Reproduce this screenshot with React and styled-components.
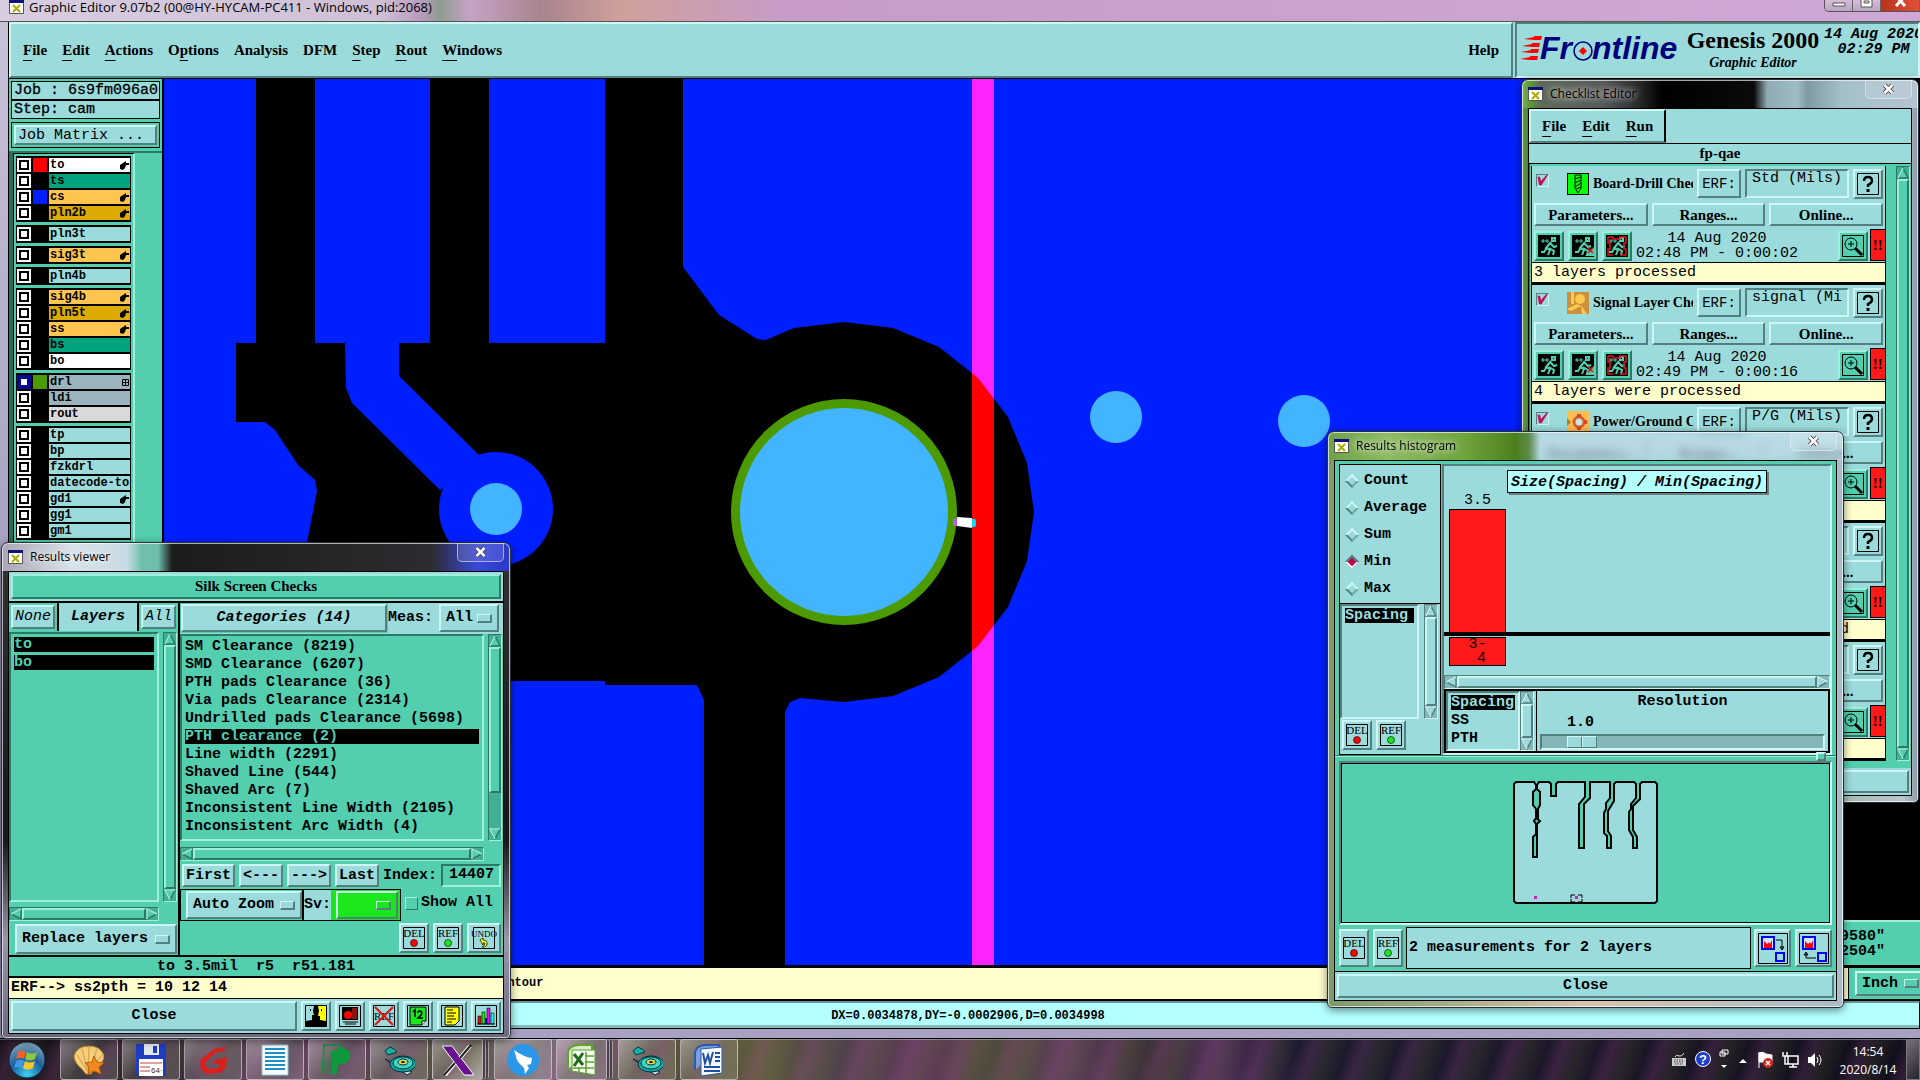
import React, { useState } from "react";
import styled, { createGlobalStyle, css } from "styled-components";

const mono = `"Liberation Mono", "DejaVu Sans Mono", monospace`;
const serif = `"Liberation Serif", "DejaVu Serif", serif`;
const ui = `"Open Sans", "Noto Sans", sans-serif`;

const color = {
  cyan: "#9cdbdb",
  cyanLight: "#cdf6f4",
  cyanDark: "#53807f",
  teal: "#53cfb0",
  tealLight: "#a0efdc",
  tealDark: "#2a7a64",
  tealTrough: "#44ae94",
  cream: "#ffffcc",
  ice: "#b4ffff",
  red: "#ff1a1a"
};

const GlobalStyle = createGlobalStyle`
  * { box-sizing: border-box; }
  html, body, #root { height: 100%; }
  body {
    margin: 0;
    overflow: hidden;
    background: #000;
    color: #000;
    font-family: ${serif};
  }
  button, input, select { font: inherit; color: inherit; margin: 0; padding: 0; }
  ul { list-style: none; margin: 0; padding: 0; }
  h1, h2, p { margin: 0; font: inherit; }
  svg { display: block; }
`;

const raised = css`
  border: 2px solid;
  border-color: ${p => (p.$teal ? `${color.tealLight} ${color.tealDark} ${color.tealDark} ${color.tealLight}` : `${color.cyanLight} ${color.cyanDark} ${color.cyanDark} ${color.cyanLight}`)};
`;
const sunken = css`
  border: 2px solid;
  border-color: ${p => (p.$teal ? `${color.tealDark} ${color.tealLight} ${color.tealLight} ${color.tealDark}` : `${color.cyanDark} ${color.cyanLight} ${color.cyanLight} ${color.cyanDark}`)};
`;

//--------------------------------------------
// shared parts
const Desktop = styled.div`
  position: relative;
  height: 100%;
  display: flex;
  flex-direction: column;
`;
const MotifButton = styled.button`
  ${raised};
  background: ${p => (p.$teal ? color.teal : color.cyan)};
  padding: 0 2px;
  font-family: ${p => (p.$serif ? serif : mono)};
  font-size: 15px;
  line-height: 18px;
  font-weight: ${p => (p.$thin ? 400 : 700)};
  font-style: ${p => (p.$italic ? "italic" : "normal")};
  text-align: ${p => p.$align || "center"};
  white-space: nowrap;
  flex: ${p => (p.$grow ? "1 1 0" : "none")};
  min-width: 0;
`;
const IconButton = styled.button`
  ${raised};
  background: ${p => (p.$teal ? color.teal : color.cyan)};
  width: ${p => (p.$wide ? 34 : 30)}px;
  height: 30px;
  flex: none;
  display: flex;
  align-items: center;
  justify-content: center;
`;
const Bar = styled.div`
  display: flex;
  flex: none;
  flex-direction: ${p => (p.$vertical ? "column" : "row")};
  ${p => (p.$vertical ? "width: 14px;" : "height: 14px;")}
  ${sunken};
  border-width: 1px;
  background: ${p => (p.$teal ? color.tealTrough : "#84b8b8")};
`;
const BarArrow = styled.button`
  border: 0;
  background: none;
  flex: none;
  width: 12px;
  height: 12px;
`;
const BarThumb = styled.div`
  flex: ${p => p.$size} 1 0;
  ${raised};
  background: ${p => (p.$teal ? color.teal : color.cyan)};
`;
const BarRest = styled.div`
  flex: ${p => p.$size} 1 0;
`;
const arrowPoints = {
  up: "6,1 11,11 1,11",
  down: "1,1 11,1 6,11",
  left: "1,6 11,1 11,11",
  right: "1,1 11,6 1,11"
};
const arrowShine = {
  up: "M1 11L6 1",
  down: "M6 11L1 1H11",
  left: "M1 6L11 1",
  right: "M1 11V1L11 6"
};
const Arrow = ({ dir, teal }) => (
  <BarArrow type="button" aria-label={`Scroll ${dir}`}>
    <svg width="12" height="12" viewBox="0 0 12 12">
      <polygon
        points={arrowPoints[dir]}
        fill={teal ? color.teal : color.cyan}
        stroke={teal ? color.tealDark : color.cyanDark}
        strokeWidth="1.500"
      />
      <path d={arrowShine[dir]} fill="none" stroke={teal ? color.tealLight : color.cyanLight} strokeWidth="1.500" />
    </svg>
  </BarArrow>
);
const ScrollBar = ({ vertical, teal, size = 1, rest = 0 }) => (
  <Bar $vertical={vertical} $teal={teal}>
    <Arrow dir={vertical ? "up" : "left"} teal={teal} />
    <BarThumb $size={size} $teal={teal} />
    {rest > 0 && <BarRest $size={rest} />}
    <Arrow dir={vertical ? "down" : "right"} teal={teal} />
  </Bar>
);
const List = styled.ul`
  ${sunken};
  flex: 1 1 0;
  min-width: 0;
  background: ${p => (p.$teal ? color.teal : color.cyan)};
  padding: ${p => (p.$teal ? 3 : 2)}px 3px;
  overflow: hidden;
`;
const ListItem = styled.button`
  display: block;
  width: 100%;
  height: 15px;
  margin-bottom: 3px;
  border: 0;
  text-align: left;
  font: 700 15px/15px ${mono};
  white-space: nowrap;
  overflow: hidden;
  color: ${p => (p.$on ? (p.$teal ? color.teal : color.cyan) : "#000")};
  background: ${p => (p.$on ? "#000" : "transparent")};
`;
const OptionMenu = styled.label`
  ${raised};
  background: ${p => p.$bg || color.cyan};
  display: flex;
  align-items: center;
  padding: 0 5px;
  width: ${p => p.$w || "auto"};
  height: 100%;
  select {
    flex: 1 1 0;
    min-width: 0;
    appearance: none;
    border: 0;
    background: none;
    font: 700 15px/18px ${mono};
  }
  &::after {
    content: "";
    width: 12px;
    height: 6px;
    flex: none;
    border: 1px solid;
    border-width: 1px 2px 2px 1px;
    border-color: ${color.cyanLight} ${color.cyanDark} ${color.cyanDark} ${color.cyanLight};
  }
`;
const Tick = styled.input.attrs({ type: "checkbox" })`
  appearance: none;
  width: 13px;
  height: 13px;
  flex: none;
  border: 1px solid;
  border-color: ${p => (p.$raised ? `${color.tealLight} ${color.tealDark} ${color.tealDark} ${color.tealLight}` : `${color.cyanDark} ${color.cyanLight} ${color.cyanLight} ${color.cyanDark}`)};
  &:checked::after {
    content: "";
    display: block;
    width: 11px;
    height: 11px;
    background: #c0105a;
    clip-path: polygon(5% 15%, 28% 15%, 36% 55%, 85% 0, 100% 0, 40% 95%, 18% 90%);
  }
`;

//--------------------------------------------
// framed window
const Frame = styled.section`
  position: absolute;
  display: flex;
  flex-direction: column;
  width: ${p => p.$width}px;
  padding: 0 6px 6px;
  border: 1px solid #26323a;
  border-radius: 7px 7px 5px 5px;
  box-shadow: inset 0 0 0 1px rgba(255, 255, 255, 0.65), 0 2px 8px rgba(0, 0, 0, 0.5);
  background: ${p => p.$glass};
`;
const ViewerFrame = styled(Frame)`
  left: 1px;
  bottom: 41px;
  padding-bottom: 4px;
`;
const ChecklistFrame = styled(Frame)`
  top: 79px;
  right: 1px;
`;
const HistogramFrame = styled(Frame)`
  top: 431px;
  right: 76px;
  backdrop-filter: blur(4px);
`;
const Caption = styled.header`
  height: 28px;
  flex: none;
  display: flex;
  align-items: center;
  gap: 7px;
  font: 400 12px/16px ${ui};
  h2 {
    flex: 1;
    text-shadow: 0 0 6px rgba(255, 255, 255, 0.8), 0 0 10px rgba(255, 255, 255, 0.7);
  }
`;
const CloseGlass = styled.button`
  align-self: flex-start;
  width: 47px;
  height: 19px;
  border: 1px solid rgba(230, 240, 250, 0.6);
  border-top: 0;
  border-radius: 0 0 5px 5px;
  background: rgba(255, 255, 255, 0.12);
  display: flex;
  align-items: center;
  justify-content: center;
`;
const Inner = styled.div`
  border: 1px solid #000;
  background: ${p => p.$bg};
  display: flex;
  flex-direction: column;
`;
const XIcon = () => (
  <svg width="15" height="14" viewBox="0 0 15 14">
    <path d="M.5 .5H14.500V13.500H.5Z" fill="#fff" stroke="#555" />
    <path d="M0 0H15V3H0Z" fill="#10107a" />
    <path d="M4 5L11 12M11 5L4 12" stroke="#a9ad00" strokeWidth="2" />
  </svg>
);
const CrossIcon = () => (
  <svg width="13" height="12" viewBox="0 0 13 12">
    <path d="M2.500 2L10.500 10M10.500 2L2.500 10" stroke="#444" strokeWidth="4.500" />
    <path d="M2.500 2L10.500 10M10.500 2L2.500 10" stroke="#fff" strokeWidth="2.600" />
  </svg>
);
const WindowCaption = ({ title }) => (
  <Caption>
    <XIcon />
    <h2>{title}</h2>
    <CloseGlass type="button" aria-label="Close window">
      <CrossIcon />
    </CloseGlass>
  </Caption>
);

//--------------------------------------------
// main window
const Main = styled.main`
  flex: 1 1 0;
  min-height: 0;
  display: flex;
  flex-direction: column;
  padding: 0 0 9px 8px;
  background: linear-gradient(#c9c4d8, #8f8ab0 90%, #aaa2c4);
`;
const MainCaption = styled.header`
  height: 22px;
  flex: none;
  display: flex;
  align-items: flex-start;
  margin-left: -8px;
  padding-left: 9px;
  gap: 5px;
  font: 400 13px/14px ${ui};
  border-bottom: 1px solid #555;
  background: linear-gradient(90deg, #d8cde0 0, #cfc0d6 380px, #b99cc0 420px, #8f9c90 440px, #c6a3c6 470px, #a8848f 540px, #cf9f9a 620px, #c79bc6 780px, #cfa9d6 100%);
  h1 {
    flex: 1;
    white-space: nowrap;
  }
`;
const Controls = styled.div`
  display: flex;
  height: 12px;
  border: 1px solid #555;
  border-width: 0 0 1px 1px;
  border-radius: 0 0 0 5px;
  overflow: hidden;
`;
const Control = styled.button`
  width: ${p => (p.$close ? 39 : 28)}px;
  border: 0;
  border-right: 1px solid #666;
  background: ${p => (p.$close ? "linear-gradient(90deg, #b8321c, #e0503a)" : "linear-gradient(#d8bcd8, #b9a4c4)")};
  display: flex;
  align-items: flex-start;
  justify-content: center;
`;
const MenuRow = styled.div`
  flex: none;
  display: flex;
  gap: 2px;
  height: 57px;
  background: ${color.cyan};
  border-left: 1px solid #000;
  border-bottom: 1px solid #000;
`;
const Menu = styled.nav`
  ${raised};
  flex: 1;
  display: flex;
  align-items: center;
  gap: 15px;
  padding: 0 12px;
`;
const MenuItem = styled.button`
  border: 0;
  background: none;
  font: 700 15px/20px ${serif};
  &:last-child {
    margin-left: ${p => (p.$last ? "auto" : 0)};
  }
  u {
    text-underline-offset: 5px;
    text-decoration-thickness: 1px;
  }
`;
const Brand = styled.div`
  ${sunken};
  flex: none;
  width: 405px;
  display: flex;
  align-items: center;
  padding-left: 3px;
  overflow: hidden;
  svg {
    flex: none;
  }
`;
const Product = styled.div`
  width: 138px;
  flex: none;
  text-align: center;
  font: 700 24px/26px ${serif};
  small {
    display: block;
    font: italic 700 14px/20px ${serif};
  }
`;
const Stamp = styled.time`
  flex: none;
  align-self: flex-start;
  padding: 3px 0 0 2px;
  text-align: center;
  font: italic 700 15px/15px ${mono};
  span {
    display: block;
  }
`;
const Work = styled.div`
  flex: 1 1 0;
  min-height: 0;
  display: flex;
  border-bottom: 3px solid #000;
`;
const Side = styled.aside`
  flex: none;
  width: 156px;
  display: flex;
  flex-direction: column;
  background: ${color.teal};
  border: 1px solid #000;
  border-width: 0 2px 0 1px;
  overflow: hidden;
`;
const JobBox = styled.div`
  margin: 2px 2px 0;
  border: 1px solid #000;
  background: ${color.cyan};
  font: 400 15px/17px ${mono};
  -webkit-text-stroke: 0.3px #000;
  padding-left: 2px;
  white-space: pre;
  & + & {
    margin-top: 0;
  }
`;
const MatrixBox = styled.div`
  margin: 3px 2px 0;
  border: 1px solid #000;
  padding: 2px;
  display: flex;
  height: 26px;
`;
const LayerPane = styled.div`
  margin-top: 3px;
  flex: 1 1 0;
  min-height: 0;
  display: flex;
  border-top: 2px solid ${color.tealDark};
  border-left: 4px solid #2c6a5c;
`;
const LayerList = styled.div`
  width: 122px;
  padding: 2px;
  display: flex;
  flex-direction: column;
  gap: 3px;
  border: 1px solid #000;
  border-right: 2px solid ${color.tealLight};
`;
const LayerGroup = styled.ul`
  flex: none;
  background: #000;
  padding: 2px 1px;
  display: flex;
  flex-direction: column;
  gap: 2px;
`;
const LayerRow = styled.li`
  height: 14px;
  display: flex;
  gap: 2px;
`;
const LayerTick = styled.input.attrs({ type: "checkbox" })`
  appearance: none;
  width: 14px;
  height: 14px;
  flex: none;
  background: #fff;
  border: 2px solid ${p => (p.$active ? "#0a0a8c" : "#fff")};
  outline: 2px solid ${p => (p.$active ? "#0a0a8c" : "#000")};
  outline-offset: -4px;
`;
const Swatch = styled.i`
  width: 14px;
  flex: none;
  background: ${p => p.$c || "#000"};
`;
const LayerName = styled.button`
  flex: 1;
  border: 0;
  display: flex;
  align-items: center;
  justify-content: space-between;
  padding: 0 1px;
  background: ${p => p.$c};
  font: 700 12px/14px ${mono};
  white-space: nowrap;
`;
const Canvas = styled.div`
  flex: 1 1 0;
  min-width: 0;
  background: #001fff;
  overflow: hidden;
  svg {
    width: 100%;
    height: 100%;
  }
`;
const Tools = styled.aside`
  width: 158px;
  flex: none;
  background: #000;
  display: flex;
  flex-direction: column;
  justify-content: flex-end;
`;
const Coords = styled.p`
  border-top: 2px solid ${color.tealLight};
  background: ${color.teal};
  padding: 7px 35px 6px 0;
  text-align: right;
  font: 700 15px/15px ${mono};
`;
const Prompt = styled.div`
  flex: none;
  display: flex;
  height: 33px;
  background: ${color.cream};
  border-bottom: 2px solid #000;
  overflow: hidden;
  p {
    flex: 1;
    padding-left: 485px;
    font: 700 12px/31px ${mono};
  }
`;
const UnitBox = styled.div`
  width: 78px;
  margin-right: -6px;
  border-left: 1px solid #000;
  background: ${color.teal};
  padding: 3px 0 3px 6px;
`;
const StatusLine = styled.div`
  flex: none;
  height: 28px;
  border: 1px solid #000;
  border-top: 2px solid #6a9696;
  background: ${color.ice};
  text-align: center;
  padding-left: 8px;
  box-shadow: inset 0 -3px 0 #86bcbc;
  font: 700 12px/27px ${mono};
`;

const hand = (
  <svg width="9" height="9" viewBox="0 0 9 9">
    <path d="M0 4L3 2L6 0V2H9V4H6L5 7L3 9L0 8Z" />
  </svg>
);
const grid = (
  <svg width="7" height="7" viewBox="0 0 7 7">
    <path d="M.5 .5H6.500V6.500H.5ZM3.500 0V7M0 3.500H7" fill="none" stroke="#000" />
  </svg>
);

const C = { c: color.cyan, y: "#ffc54e", g: "#dcaa00", t: "#00a37e", s: "#9bb3bd" };
const layers = [
  [
    ["to", "#fff", hand, "#f00"],
    ["ts", C.t],
    ["cs", C.y, hand, "#001fff"],
    ["pln2b", C.g, hand]
  ],
  [["pln3t", C.c]],
  [["sig3t", C.y, hand]],
  [["pln4b", C.c]],
  [
    ["sig4b", C.y, hand],
    ["pln5t", C.g, hand],
    ["ss", C.y, hand],
    ["bs", C.t],
    ["bo", "#fff"]
  ],
  [
    ["drl", C.s, grid, "#4a9a00"],
    ["ldi", C.s],
    ["rout", "#d9d9d9"]
  ],
  [
    ["tp", C.c],
    ["bp", C.c],
    ["fzkdrl", C.c],
    ["datecode-to", C.c],
    ["gd1", C.c, hand],
    ["gg1", C.c],
    ["gm1", C.c]
  ]
];

const FrontlineLogo = () => (
  <svg width="164" height="42" viewBox="0 -4 164 42">
    <g fill="#f00">
      <path d="M4 6L14 4V3H22L21 7H14ZM2 13L12 11V10H20L19 14H12ZM1 19L11 17V16H19L18 20H11ZM0 26L10 24V23H18L17 27H10Z" />
    </g>
    <g fill="#00007c" fontFamily="Liberation Sans, Arial, sans-serif" fontWeight="700" fontStyle="italic" fontSize="32">
      <text x="20" y="26">Fr</text>
      <text x="72" y="26">ntline</text>
    </g>
    <circle cx="63" cy="18" r="9" fill="none" stroke="#00007c" strokeWidth="1.500" />
    <path d="M63 14L67 18L63 22L59 18Z" fill="#f00" />
  </svg>
);

const PAD =
  "1034,512 1027,463 1008,417 978,378 939,347 893,328 844,322 794,328 749,347 710,378 690,512 710,646 749,677 794,696 844,702 893,696 939,677 978,646 1008,607 1027,561";

const Board = () => (
  <svg viewBox="164 79 1598 886" preserveAspectRatio="xMinYMin slice">
    <path d="M164 79H256V79H315V343H430V79H489V343H605V79H683V267L719 315L757 339L764 340L780 360L900 600L843 702L800 698L790 702L785 712V965H704V700L697 685H605V681H307V542L317 491L315 480L298 465L275 430L265 422H236V343H256V79Z" />
    <polygon points={PAD} />
    <path d="M345 342H399V376L479 455L440 490L352 403L346 388Z" fill="#001fff" />
    <circle cx="496" cy="509" r="57" fill="#001fff" />
    <circle cx="496" cy="509" r="26" fill="#43b4ff" />
    <path d="M972 79H994V965H972Z" fill="#ff23ff" />
    <clipPath id="pad">
      <polygon points={PAD} />
    </clipPath>
    <path d="M972 79H994V965H972Z" fill="#f00" clipPath="url(#pad)" />
    <circle cx="844" cy="512" r="108.500" fill="#43b4ff" stroke="#4a9a00" strokeWidth="9" />
    <circle cx="1116" cy="417" r="26" fill="#43b4ff" />
    <circle cx="1304" cy="421" r="26" fill="#43b4ff" />
    <path d="M957 517L972 518V528L957 526Z" fill="#fff" />
    <path d="M953 519L957 518V526H953Z" fill="#b060e0" />
    <path d="M972 519H975L976 521V525L975 527H972Z" fill="#00e0ff" />
  </svg>
);

const Hot = ({ text, at }) =>
  at === undefined ? (
    text
  ) : (
    <>
      {text.slice(0, at)}
      <u>{text[at]}</u>
      {text.slice(at + 1)}
    </>
  );

const mainMenu = [
  ["File", 0],
  ["Edit", 0],
  ["Actions", 0],
  ["Options", 1],
  ["Analysis"],
  ["DFM"],
  ["Step", 0],
  ["Rout", 0],
  ["Windows", 0]
];

const MainWindow = () => (
  <Main>
    <MainCaption>
      <XIcon />
      <h1>Graphic Editor 9.07b2 (00@HY-HYCAM-PC411 - Windows, pid:2068)</h1>
      <Controls>
        <Control type="button" aria-label="Minimize">
          <svg width="14" height="8" viewBox="0 0 14 8">
            <path d="M1 3H13V6H1Z" fill="#fff" stroke="#555" />
          </svg>
        </Control>
        <Control type="button" aria-label="Maximize">
          <svg width="13" height="8" viewBox="0 0 13 8">
            <path d="M1 -3H12V7H1ZM4 1H9V3H4Z" fill="#fff" stroke="#555" />
          </svg>
        </Control>
        <Control type="button" $close aria-label="Close">
          <svg width="13" height="8" viewBox="0 4 13 8">
            <path d="M2 0L11 10M11 0L2 10" stroke="#fff" strokeWidth="3" />
          </svg>
        </Control>
      </Controls>
    </MainCaption>
    <MenuRow>
      <Menu>
        {mainMenu.map(([text, at]) => (
          <MenuItem type="button" key={text}>
            <Hot text={text} at={at} />
          </MenuItem>
        ))}
        <MenuItem type="button" $last>
          Help
        </MenuItem>
      </Menu>
      <Brand>
        <FrontlineLogo />
        <Product>
          Genesis 2000
          <small>Graphic Editor</small>
        </Product>
        <Stamp>
          <span>14 Aug 2020</span>
          <span>02:29 PM</span>
        </Stamp>
      </Brand>
    </MenuRow>
    <Work>
      <Side>
        <JobBox>Job : 6s9fm096a0</JobBox>
        <JobBox>Step: cam</JobBox>
        <MatrixBox>
          <MotifButton type="button" $grow $thin $align="left">
            Job Matrix ...
          </MotifButton>
        </MatrixBox>
        <LayerPane>
          <LayerList>
            {layers.map((group, i) => (
              <LayerGroup key={i}>
                {group.map(([name, bg, mark, swatch]) => (
                  <LayerRow key={name}>
                    <LayerTick aria-label={name} $active={name === "drl"} />
                    <Swatch $c={swatch} />
                    <LayerName type="button" $c={bg}>
                      {name}
                      {mark}
                    </LayerName>
                  </LayerRow>
                ))}
              </LayerGroup>
            ))}
          </LayerList>
        </LayerPane>
      </Side>
      <Canvas>
        <Board />
      </Canvas>
      <Tools>
        <Coords>
          9580"
          <br />
          2504"
        </Coords>
      </Tools>
    </Work>
    <Prompt>
      <p>contour</p>
      <UnitBox>
        <OptionMenu $bg={color.teal}>
          <select aria-label="Units">
            <option>Inch</option>
          </select>
        </OptionMenu>
      </UnitBox>
    </Prompt>
    <StatusLine>DX=0.0034878,DY=-0.0002906,D=0.0034998</StatusLine>
  </Main>
);

//--------------------------------------------
// small glyph buttons
const WordIcon = ({ word, dot }) => (
  <svg width="26" height="24" viewBox="0 0 26 24">
    <path d="M2.500 1.500H23.500V22.500H2.500Z" fill="none" stroke="#000" />
    <text x="13" y="11" textAnchor="middle" fontFamily="Liberation Serif, serif" fontSize={word.length > 3 ? 9 : 11}>
      {word}
    </text>
    {dot ? (
      <circle cx="13" cy="17" r="3.500" fill={dot} stroke="#000" strokeWidth=".6" />
    ) : (
      <path d="M9 14L12 12V14Q17 14 16 19Q14 22 11 21Q14 20 14 17H12V19Z" fill="#ff0" stroke="#000" strokeWidth=".7" />
    )}
  </svg>
);
const DelRef = () => (
  <>
    <IconButton type="button">
      <WordIcon word="DEL" dot="#f00" />
    </IconButton>
    <IconButton type="button">
      <WordIcon word="REF" dot="#1be81b" />
    </IconButton>
  </>
);
const toolGlyphs = {
  profile: (
    <>
      <path d="M2 2H22V22H2Z" />
      <path d="M2 2H10L9 7L10 11H8V16L2 17Z" fill={color.cyan} />
      <path d="M14 2H22V17L16 16V12H14L15 7Z" fill="#ff0" />
      <path d="M6 5H7V7H6ZM17 5H18V7H17Z" />
    </>
  ),
  display: (
    <>
      <path d="M4 3H20V16H4Z" />
      <path d="M14 4H19V15H14Z" fill="#8c1414" />
      <circle cx="10" cy="11" r="4" fill="#f00" />
      <path d="M5 18H20M7 20H18" stroke="#000" />
    </>
  ),
  noref: (
    <>
      <text x="12" y="16" textAnchor="middle" fontFamily="Liberation Serif, serif" fontSize="11">
        REF
      </text>
      <path d="M3 3L21 21M21 3L3 21" stroke="#e01010" strokeWidth="2" />
    </>
  ),
  count: (
    <>
      <path d="M4 3H20V17L16 21H4Z" fill="#1be81b" stroke="#000" />
      <path d="M16 21V17H20" fill="#fff" stroke="#000" />
      <path d="M7 8L9 6V13M12 9Q12 7 14 7Q17 8 15 11L12 14H17" fill="none" stroke="#000" strokeWidth="1.600" />
    </>
  ),
  note: (
    <>
      <path d="M5 3H19V17L15 21H5Z" fill="#ff0" stroke="#000" />
      <path d="M7 6H13M7 9H16M7 12H14M7 15H16M7 18H12" stroke="#000" />
    </>
  ),
  chart: (
    <>
      <path d="M4 12H7V20H4Z" fill="#e01010" stroke="#000" strokeWidth=".6" />
      <path d="M8 8H11V20H8Z" fill="#1be81b" stroke="#000" strokeWidth=".6" />
      <path d="M11 14H13V20H11Z" fill="#00f" />
      <path d="M13 4H16V20H13Z" fill="#f0f" stroke="#000" strokeWidth=".6" />
      <path d="M17 9H20V20H17Z" fill="#0ff" stroke="#000" strokeWidth=".6" />
      <path d="M3 20H21" stroke="#000" />
    </>
  )
};
const ToolIcon = ({ name }) => (
  <svg width="24" height="24" viewBox="0 0 24 24">
    <path d="M1.500 1.500H22.500V22.500H1.500Z" fill="none" stroke="#000" />
    {toolGlyphs[name]}
  </svg>
);

//--------------------------------------------
// results viewer
const ViewerBody = styled.div`
  display: grid;
  grid-template-columns: 171px 1fr;
  border: 2px solid #000;
  border-width: 2px 0;
`;
const ViewerTitle = styled.div`
  ${raised};
  margin: 2px;
  height: 25px;
  background: ${color.teal};
  border-color: ${color.tealLight} ${color.tealDark} ${color.tealDark} ${color.tealLight};
  text-align: center;
  font: 700 15px/21px ${serif};
`;
const Col = styled.div`
  display: flex;
  flex-direction: column;
  min-width: 0;
  background: ${color.teal};
  border-right: ${p => (p.$split ? "2px solid #000" : 0)};
`;
const Strip = styled.div`
  display: flex;
  align-items: stretch;
  flex: none;
  height: ${p => p.$h}px;
  gap: ${p => p.$gap || 0}px;
  padding: ${p => p.$pad || 0};
  background: ${p => p.$bg || "transparent"};
  justify-content: ${p => (p.$end ? "flex-end" : "flex-start")};
`;
const LayersHead = styled.span`
  flex: 1;
  background: ${color.cyan};
  border: 2px solid #000;
  border-width: 0 2px;
  text-align: center;
  font: italic 700 15px/28px ${mono};
`;
const Note = styled.label`
  font: 700 15px/${p => p.$lh || 23}px ${mono};
  background: ${p => (p.$cyan ? color.cyan : "transparent")};
  white-space: nowrap;
`;
const IndexField = styled.input`
  ${sunken};
  width: 60px;
  margin-left: auto;
  background: ${color.teal};
  padding: 0 4px 2px 6px;
  font: 700 15px/18px ${mono};
`;
const ZoomBox = styled.div`
  display: flex;
  border: 1px solid #000;
  padding: ${p => p.$pad || "1px 0 1px 5px"};
`;
const ResultText = styled.p`
  border-bottom: 2px solid #000;
  background: ${color.teal};
  text-align: center;
  white-space: pre;
  font: 700 15px/19px ${mono};
`;
const ErfText = styled.p`
  background: ${color.cream};
  border-bottom: 1px solid #000;
  padding-left: 2px;
  font: 700 15px/20px ${mono};
`;
const HScroll = styled.div`
  flex: 1;
  display: grid;
`;
const CategoryHead = styled(MotifButton)`
  width: 206px;
`;
const Severity = styled.div`
  padding: 1px 2px 1px 5px;
  background: #1be81b;
`;
const ShowAll = styled.label`
  display: flex;
  gap: 3px;
  align-items: center;
  padding: 0 0 4px 4px;
  font: 700 15px/18px ${mono};
`;

const categories = [
  "SM Clearance (8219)",
  "SMD Clearance (6207)",
  "PTH pads Clearance (36)",
  "Via pads Clearance (2314)",
  "Undrilled pads Clearance (5698)",
  "PTH clearance (2)",
  "Line width (2291)",
  "Shaved Line (544)",
  "Shaved Arc (7)",
  "Inconsistent Line Width (2105)",
  "Inconsistent Arc Width (4)"
];

const ResultsViewer = () => {
  const [category, setCategory] = useState("PTH clearance (2)");
  const [index, setIndex] = useState("14407");
  return (
    <ViewerFrame
      $width={510}
      $glass="linear-gradient(90deg, #aaa6b4 0, #d8e2ea 70px, #c9dbe4 125px, #6fbfae 140px, #6fbfae 156px, #1c1c1c 170px, #2c2c30 430px, #3a48d8 475px, #2a38c8 100%) top / 100% 28px no-repeat, linear-gradient(#333, #17171c 60%, #9b96a8 80%, #6e6880)"
    >
      <WindowCaption title="Results viewer" />
      <Inner $bg={color.cyan}>
        <ViewerTitle>Silk Screen Checks</ViewerTitle>
        <ViewerBody>
          <Col $split>
            <Strip $h={28}>
              <Strip $h={28} $pad="2px">
                <MotifButton type="button" $thin $italic>
                  None
                </MotifButton>
              </Strip>
              <LayersHead>Layers</LayersHead>
              <Strip $h={28} $pad="2px">
                <MotifButton type="button" $thin $italic>
                  All
                </MotifButton>
              </Strip>
            </Strip>
            <Strip $h={271} $gap={4} $pad="1px 1px 0 0">
              <List $teal>
                <li>
                  <ListItem type="button" $on $teal>
                    to
                  </ListItem>
                </li>
                <li>
                  <ListItem type="button" $on $teal>
                    bo
                  </ListItem>
                </li>
              </List>
              <ScrollBar vertical teal />
            </Strip>
            <Strip $h={21} $pad="5px 19px 2px 0">
              <HScroll>
                <ScrollBar teal />
              </HScroll>
            </Strip>
            <Strip $h={32} $pad="1px 1px 1px 6px">
              <OptionMenu $w="100%">
                <select aria-label="Layer mode">
                  <option>Replace layers</option>
                </select>
              </OptionMenu>
            </Strip>
          </Col>
          <Col>
            <Strip $h={31} $bg={color.cyan}>
              <Strip $h={30} $pad="1px" $bg={color.teal}>
                <CategoryHead type="button" $italic>
                  Categories (14)
                </CategoryHead>
              </Strip>
              <Note $lh={30}>Meas:</Note>
              <Strip $h={30} $pad="1px 1px 1px 6px">
                <OptionMenu $w="60px">
                  <select aria-label="Measurements">
                    <option>All</option>
                  </select>
                </OptionMenu>
              </Strip>
            </Strip>
            <Strip $h={207} $gap={4} $pad="0 1px 0 0">
              <List $teal>
                {categories.map(c => (
                  <li key={c}>
                    <ListItem type="button" $teal $on={c === category} onClick={() => setCategory(c)}>
                      {c}
                    </ListItem>
                  </li>
                ))}
              </List>
              <ScrollBar vertical teal size={8} rest={2} />
            </Strip>
            <Strip $h={23} $pad="6px 19px 3px 0">
              <HScroll>
                <ScrollBar teal />
              </HScroll>
            </Strip>
            <Strip $h={25} $gap={4} $pad="0 2px 2px">
              <MotifButton type="button">First</MotifButton>
              <MotifButton type="button">&lt;---</MotifButton>
              <MotifButton type="button">---&gt;</MotifButton>
              <MotifButton type="button">Last</MotifButton>
              <Note htmlFor="index">Index:</Note>
              <IndexField id="index" $teal value={index} onChange={e => setIndex(e.target.value)} />
            </Strip>
            <Strip $h={32}>
              <ZoomBox>
                <OptionMenu $w="116px">
                  <select aria-label="Zoom mode">
                    <option>Auto Zoom</option>
                  </select>
                </OptionMenu>
              </ZoomBox>
              <ZoomBox $pad="0">
                <Note $cyan $lh={30}>
                  Sv:
                </Note>
                <Severity>
                  <OptionMenu $w="62px" $bg="#1be81b">
                    <select aria-label="Severity">
                      <option></option>
                    </select>
                  </OptionMenu>
                </Severity>
              </ZoomBox>
              <ShowAll>
                <Tick $raised />
                Show All
              </ShowAll>
            </Strip>
            <Strip $h={33} $gap={4} $pad="2px 2px 0" $end>
              <DelRef />
              <IconButton type="button" $wide>
                <WordIcon word="UNDO" />
              </IconButton>
            </Strip>
          </Col>
        </ViewerBody>
        <ResultText>to 3.5mil  r5  r51.181</ResultText>
        <ErfText>ERF--&gt; ss2pth = 10 12 14</ErfText>
        <Strip $h={34} $gap={4} $pad="2px 2px">
          <MotifButton type="button" $grow>
            Close
          </MotifButton>
          {Object.keys(toolGlyphs).map(name => (
            <IconButton type="button" key={name} aria-label={name}>
              <ToolIcon name={name} />
            </IconButton>
          ))}
        </Strip>
      </Inner>
    </ViewerFrame>
  );
};

//--------------------------------------------
// checklist editor
const CheckMenu = styled.div`
  height: 35px;
  display: flex;
  border-bottom: 1px solid #000;
`;
const CheckMenuBox = styled(Menu)`
  flex: none;
  border-right-color: #000;
  gap: 16px;
  padding: 0 11px;
`;
const CheckName = styled.p`
  border-bottom: 1px solid #000;
  text-align: center;
  font: 700 15px/19px ${serif};
`;
const CheckPane = styled.div`
  background: ${color.teal};
  padding: 2px 1px 7px 1px;
  display: flex;
  gap: 10px;
  border-left: 1px solid ${color.tealDark};
`;
const CheckList = styled.div`
  flex: 1;
  min-width: 0;
  border: 1px solid #000;
  border-width: 0 1px;
`;
const CheckItem = styled.article`
  background: ${color.cyan};
  border-bottom: 3px solid #000;
  padding-top: 3px;
`;
const CheckTop = styled.div`
  display: flex;
  height: 29px;
  margin-bottom: 5px;
  padding: 0 2px 0 4px;
  gap: 4px;
  ${Tick} {
    margin: 5px 14px 0 0;
  }
  > svg {
    align-self: center;
    flex: none;
  }
  > label {
    flex: 1 1 0;
    min-width: 0;
    overflow: hidden;
    white-space: nowrap;
    font: 700 14px/29px ${serif};
  }
`;
const ErfField = styled.input`
  ${sunken};
  width: 104px;
  background: ${color.cyan};
  padding: 0 2px 10px 5px;
  font: 400 15px/16px ${mono};
`;
const ErfButton = styled(MotifButton)`
  width: 44px;
  font-size: 14px;
`;
const Three = styled.div`
  display: grid;
  grid-template-columns: 1fr 1fr 1fr;
  gap: 4px;
  height: 23px;
  margin: 0 2px 5px;
`;
const CheckRun = styled.div`
  display: flex;
  height: 30px;
  margin-bottom: 1px;
  padding-left: 2px;
  gap: 4px;
  time {
    flex: 1;
    text-align: center;
    font: 400 15px/15px ${mono};
    white-space: nowrap;
  }
`;
const MagnifyGap = styled.span`
  width: 33px;
`;
const Alarm = styled.button`
  width: 17px;
  margin: -2px -1px 0 -2px;
  border: 1px solid #000;
  background: ${color.red};
  font: 700 15px/28px ${serif};
`;
const CheckText = styled.p`
  height: 20px;
  border-top: 1px solid #000;
  background: ${color.cream};
  padding-left: 2px;
  font: 400 15px/19px ${mono};
  white-space: nowrap;
`;
const HelpIcon = () => (
  <svg width="24" height="24" viewBox="0 0 24 24">
    <path d="M1.500 1.500H22.500V22.500H1.500Z" fill="none" stroke="#000" />
    <path d="M8 9Q8 5 12 5Q16 5 16 9Q16 11 12 13V15" fill="none" stroke="#000" strokeWidth="2.500" />
    <path d="M10.500 17H13.500V20H10.500Z" />
  </svg>
);
const RunIcon = ({ kind }) => (
  <svg width="24" height="24" viewBox="0 0 24 24">
    <path d="M1 1H23V23H1Z" />
    <path d="M4 7H8M6 5V9M8 7H12M10 5V9" stroke={color.teal} />
    <path d="M15 4H18V7H15ZM14 8L9 14L13 16L11 21M13 9L17 13L20 12M11 12L7 18L4 18M12 14L17 17L16 21" fill="none" stroke={color.teal} strokeWidth="2" />
    {kind === 1 && <path d="M14 22L23 13V22Z" fill={color.teal} />}
    {kind === 1 && <path d="M17 14L22 19M22 14L17 19" stroke="#d01818" strokeWidth="1.500" />}
    {kind === 2 && (
      <path d="M3 3H8V5H15V3H21V9H19V15H21V21H15M3 3V9H5V15H3V21H8" fill="none" stroke="#e01818" strokeWidth="1.500" />
    )}
  </svg>
);
const MagnifyIcon = () => (
  <svg width="24" height="24" viewBox="0 0 24 24">
    <path d="M1.500 1.500H22.500V22.500H1.500Z" fill="none" stroke="#000" />
    <circle cx="10" cy="10" r="6" fill="none" stroke="#000" />
    <path d="M10 7V13M7 10H13" stroke="#000" />
    <path d="M14 14L21 21" stroke="#000" strokeWidth="3" />
  </svg>
);
const checkGlyphs = {
  drill: (
    <>
      <path d="M0 0H22V22H0Z" fill="#0f0" stroke="#000" strokeWidth="2" />
      <path d="M8 2H14V15L11 20L8 15ZM8 6L14 4M8 10L14 7M8 14L14 10M9 16L14 14" fill="none" stroke="#000" />
    </>
  ),
  signal: (
    <>
      <path d="M0 0H22V22H0Z" fill="#cc8f3e" />
      <path d="M4 0H7V12H4ZM0 17L10 12L14 14L4 19ZM14 13L20 22H15Z" fill="#ffc84e" />
      <circle cx="13" cy="7" r="5" fill="#ffc84e" />
    </>
  ),
  power: (
    <>
      <path d="M0 0H22V22H0Z" fill="#ffbe4e" />
      <circle cx="12" cy="11" r="5" fill="#c9e4e4" stroke="#d0612a" strokeWidth="3" />
      <path d="M10 3H14V6H10ZM10 16H14V19H10ZM17 9H20V13H17Z" fill="#e04030" />
      <path d="M0 7L4 11L0 15Z" fill="#b07a30" />
    </>
  )
};
const checks = [
  { icon: "drill", title: "Board-Drill Checks", erf: "Std (Mils)", time: "02:48 PM - 0:00:02", text: "3 layers processed" },
  { icon: "signal", title: "Signal Layer Checks", erf: "signal (Mi", time: "02:49 PM - 0:00:16", text: "4 layers were processed" },
  { icon: "power", title: "Power/Ground Checks", erf: "P/G (Mils)", time: "02:49 PM - 0:00:08", text: "" },
  { icon: "drill", title: "Solder Mask Checks", erf: "mask", time: "02:50 PM - 0:00:12", text: "2 power and ground layers processed" },
  { icon: "signal", title: "Silk Screen Checks", erf: "silk", time: "02:51 PM - 0:00:10", text: "" }
];

const ChecklistEditor = () => (
  <ChecklistFrame
    $width={398}
    $glass="linear-gradient(90deg, #7fae5a 0, #5b9a35 8px, #5d6b5a 18px, #55585a 80px, #2a2c2c 115px, #000 140px, #0a0a0a 232px, #8eaab2 245px, #9fbcc4 275px, #7f9aa2 285px, #a4c0c8 320px, #b4c4d0 100%) top / 100% 28px no-repeat, linear-gradient(90deg, #6a9a55 0, #3f7d2a 8px, #b9c6cc 380px, #8f9aa8)"
  >
    <WindowCaption title="Checklist Editor" />
    <Inner $bg={color.cyan}>
      <CheckMenu>
        <CheckMenuBox>
          {["File", "Edit", "Run"].map(m => (
            <MenuItem type="button" key={m}>
              <Hot text={m} at={0} />
            </MenuItem>
          ))}
        </CheckMenuBox>
      </CheckMenu>
      <CheckName>fp-qae</CheckName>
      <CheckPane>
        <CheckList>
          {checks.map(({ icon, title, erf, time, text }) => (
            <CheckItem key={title}>
              <CheckTop>
                <Tick id={icon + erf} defaultChecked />
                <svg width="22" height="22" viewBox="0 0 22 22">
                  {checkGlyphs[icon]}
                </svg>
                <label htmlFor={icon + erf}>{title}</label>
                <ErfButton type="button" $thin>
                  ERF:
                </ErfButton>
                <ErfField aria-label={`${title} ERF`} defaultValue={erf} />
                <IconButton type="button" aria-label="Help">
                  <HelpIcon />
                </IconButton>
              </CheckTop>
              <Three>
                <MotifButton type="button" $serif>
                  Parameters...
                </MotifButton>
                <MotifButton type="button" $serif>
                  Ranges...
                </MotifButton>
                <MotifButton type="button" $serif>
                  Online...
                </MotifButton>
              </Three>
              <CheckRun>
                {[0, 1, 2].map(kind => (
                  <IconButton type="button" $teal key={kind} aria-label={`Run ${kind + 1}`}>
                    <RunIcon kind={kind} />
                  </IconButton>
                ))}
                <time>
                  14 Aug 2020
                  <br />
                  {time}
                </time>
                <MagnifyGap />
                <IconButton type="button" $teal aria-label="View results">
                  <MagnifyIcon />
                </IconButton>
                <Alarm type="button">!!</Alarm>
              </CheckRun>
              <CheckText>{text}</CheckText>
            </CheckItem>
          ))}
        </CheckList>
        <ScrollBar vertical teal size={4} />
      </CheckPane>
      <Strip $h={27} $pad="2px">
        <MotifButton type="button" $serif $grow>
          Close
        </MotifButton>
      </Strip>
    </Inner>
  </ChecklistFrame>
);

//--------------------------------------------
// histogram
const HistTop = styled.div`
  display: grid;
  grid-template-columns: 102px 1fr;
  gap: 1px;
  height: 287px;
  margin: 3px 4px 0;
`;
const HistSide = styled.div`
  border: 1px solid #000;
  background: ${color.cyan};
  display: flex;
  flex-direction: column;
`;
const Radios = styled.fieldset`
  margin: 0;
  border: 0;
  border-bottom: 1px solid #000;
  padding: 2px 0 1px 7px;
  label {
    display: flex;
    align-items: center;
    gap: 7px;
    height: 27px;
    font: 700 15px/18px ${mono};
  }
`;
const Radio = styled.input.attrs({ type: "radio", name: "stat" })`
  appearance: none;
  width: 10px;
  height: 10px;
  border: 2px solid;
  border-color: ${color.cyanLight} #6fa4a4 ${color.cyanDark} ${color.cyanLight};
  transform: rotate(45deg);
  &:checked {
    background: #c0004a;
    border-color: ${color.cyanDark} ${color.cyanLight} #fff ${color.cyanDark};
  }
`;
const Plot = styled.div`
  ${sunken};
  background: ${color.cyan};
  display: flex;
  flex-direction: column;
  min-width: 0;
`;
const PlotTitle = styled.p`
  align-self: center;
  margin: 4px 0 0;
  padding: 2px 3px 0;
  border: 1px solid #000;
  background: ${color.ice};
  box-shadow: 2px 2px 0 #6a7f80;
  font: italic 700 15px/19px ${mono};
`;
const PlotArea = styled.div`
  flex: 1;
  display: flex;
  align-items: flex-end;
  border-bottom: 4px solid #000;
  padding-left: 5px;
`;
const Column = styled.div`
  width: 57px;
  text-align: center;
  font: 400 15px/16px ${mono};
`;
const Fill = styled.div`
  border: 1px solid #000;
  border-bottom: 0;
  background: ${color.red};
`;
const Bin = styled.div`
  width: 57px;
  height: 29px;
  margin: 1px 0 9px 5px;
  border: 1px solid #000;
  background: ${color.red};
  text-align: center;
  font: 400 15px/14px ${mono};
  span {
    display: block;
    padding-left: 8px;
  }
`;
const PlotFoot = styled.div`
  display: grid;
  grid-template-columns: 74px 16px 1fr;
  height: 64px;
  border: 2px solid #000;
`;
const Resolution = styled.label`
  border-left: 1px solid #000;
  padding: 2px 3px 0;
  font: 700 15px/18px ${mono};
  text-align: center;
  output {
    display: block;
    text-align: left;
    padding: 4px 0 3px 27px;
    line-height: 16px;
  }
`;
const Slider = styled.input.attrs({ type: "range" })`
  appearance: none;
  display: block;
  width: 100%;
  height: 16px;
  ${sunken};
  background: #84b8b8;
  &::-webkit-slider-thumb {
    appearance: none;
    width: 30px;
    height: 12px;
    border: 1px solid;
    border-color: ${color.cyanLight} ${color.cyanDark} ${color.cyanDark} ${color.cyanLight};
    background: linear-gradient(90deg, ${color.cyan} 13px, ${color.cyanDark} 13px, ${color.cyanDark} 14px, ${color.cyanLight} 14px, ${color.cyanLight} 15px, ${color.cyan} 15px);
  }
`;
const Sash = styled.div`
  height: 10px;
  display: flex;
  justify-content: flex-end;
  align-items: center;
  padding-right: 10px;
  background: linear-gradient(transparent 4px, ${color.tealDark} 4px, ${color.tealDark} 5px, ${color.tealLight} 5px, ${color.tealLight} 6px, transparent 6px);
  span {
    ${raised};
    width: 10px;
    height: 9px;
    background: ${color.teal};
  }
`;
const Preview = styled.div`
  ${sunken};
  margin: 0 4px;
  height: 164px;
  background: ${color.teal};
  display: grid;
  place-items: center;
  box-shadow: inset 0 0 0 1px #000;
`;
const Summary = styled.p`
  flex: 1;
  border: 1px solid #000;
  background: ${color.cyan};
  padding-left: 2px;
  font: 700 15px/40px ${mono};
`;
const HistActions = styled.div`
  display: flex;
  align-items: center;
  gap: 4px;
  height: 42px;
  margin: 2px 4px;
  ${IconButton} {
    height: 38px;
  }
  ${Summary} {
    margin: 0 -1px;
  }
  ${Summary} ~ ${IconButton} {
    width: 37px;
  }
`;
const HistClose = styled.div`
  border-top: 1px solid #000;
  background: ${color.cyan};
  padding: 2px;
  display: flex;
  height: 29px;
`;

const Outline = () => (
  <svg width="146" height="124" viewBox="0 0 146 124">
    <path
      d="M3 1H21L23 4V8L20 11V24L23 28V38H25V28L27 24V11L24 8V4L26 1H36L38 3V15H43V3L45 1H72V16L66 23V67H71V23L77 17V1H97V17L93 22V28L91 32V52L94 55V67H98V55L95 50V30L101 20V3L103 1H121L123 3V17L118 23V28L116 31V49L120 56V67H124V56L120 49V25L127 18V3L129 1H142L144 3V120L142 122H3L1 120V3Z"
      fill={color.cyan}
      stroke="#000"
      strokeWidth="2"
    />
    <path d="M23 37L21 40L23 43V53L20 56V76H24V43L27 40Z" fill={color.teal} stroke="#000" strokeWidth="2" />
    <path d="M21 115H24V118H21ZM62 115H65V118H62Z" fill="#d020c0" />
    <path d="M58 117V114H62M65 114H69V117M69 118V121H65M62 121H58V118" fill="none" stroke="#000" />
  </svg>
);
const SwapIcon = ({ back }) => (
  <svg width="30" height="31" viewBox="0 0 30 31">
    <path d="M.5 .5H29.500V30.500H.5Z" fill="none" stroke="#000" />
    <path d="M4 4H16V16H4Z" fill="#cfe8ff" stroke="#00f" strokeWidth="2" />
    <path d="M6 15V8L9 11L11 9L12 11L14 7V15Z" fill="#f00" />
    <path d={back ? "M19 20H27V28H19Z" : "M18 20H26V28H18Z"} fill={color.cyan} stroke="#00f" strokeWidth="2" />
    {back ? (
      <path d="M17 25H7V20M5 22L7 19L9 22Z" fill="none" stroke="#000" />
    ) : (
      <path d="M18 7H24V16M22 14L24 17L26 14Z" fill="none" stroke="#000" />
    )}
  </svg>
);

const stats = ["Count", "Average", "Sum", "Min", "Max"];

const Histogram = () => {
  const [stat, setStat] = useState("Min");
  const [res, setRes] = useState(10);
  return (
    <HistogramFrame
      $width={517}
      $glass="linear-gradient(90deg, #6fa048 0, #8fbb62 60px, #6da23a 140px, #4a7f1c 188px, #5c8a48 200px, rgba(190, 212, 228, 0.65) 212px, rgba(196, 216, 232, 0.65) 100%) top / 100% 28px no-repeat, linear-gradient(90deg, #7c9a6a 0, #d8c4ae 50%, #a9bcc8 100%) bottom / 100% calc(100% - 28px) no-repeat"
    >
      <WindowCaption title="Results histogram" />
      <Inner $bg={color.teal}>
        <HistTop>
          <HistSide>
            <Radios>
              {stats.map(s => (
                <label key={s}>
                  <Radio checked={s === stat} onChange={() => setStat(s)} />
                  {s}
                </label>
              ))}
            </Radios>
            <Strip $h={115} $gap={5} $pad="0 2px 0 0">
              <List>
                <li>
                  <ListItem type="button" $on>
                    Spacing
                  </ListItem>
                </li>
              </List>
              <ScrollBar vertical />
            </Strip>
            <Strip $h={32} $gap={4} $pad="1px 2px 0">
              <DelRef />
            </Strip>
          </HistSide>
          <Plot>
            <PlotTitle>Size(Spacing) / Min(Spacing)</PlotTitle>
            <PlotArea>
              <Column>
                3.5
                <Fill style={{ height: 3.5 * 35 }} />
              </Column>
            </PlotArea>
            <Bin>
              3-
              <span>4</span>
            </Bin>
            <ScrollBar />
            <PlotFoot>
              <List>
                {["Spacing", "SS", "PTH"].map(s => (
                  <li key={s}>
                    <ListItem type="button" $on={s === "Spacing"}>
                      {s}
                    </ListItem>
                  </li>
                ))}
              </List>
              <ScrollBar vertical />
              <Resolution>
                Resolution
                <output>{(res / 10).toFixed(1)}</output>
                <Slider value={res} onChange={e => setRes(Number(e.target.value))} />
              </Resolution>
            </PlotFoot>
          </Plot>
        </HistTop>
        <Sash>
          <span />
        </Sash>
        <Preview>
          <Outline />
        </Preview>
        <HistActions>
          <DelRef />
          <Summary>2 measurements for 2 layers</Summary>
          <IconButton type="button" aria-label="Send to chart">
            <SwapIcon />
          </IconButton>
          <IconButton type="button" aria-label="Bring from chart">
            <SwapIcon back />
          </IconButton>
        </HistActions>
        <HistClose>
          <MotifButton type="button" $grow>
            Close
          </MotifButton>
        </HistClose>
      </Inner>
    </HistogramFrame>
  );
};

//--------------------------------------------
// taskbar
const Taskbar = styled.footer`
  height: 42px;
  flex: none;
  display: flex;
  align-items: stretch;
  gap: 4px;
  padding-left: 7px;
  border-top: 1px solid #000;
  box-shadow: inset 0 1px 0 rgba(255, 255, 255, 0.35);
  background: repeating-linear-gradient(110deg, rgba(190, 90, 170, 0) 0, rgba(190, 90, 170, 0.18) 14px, rgba(120, 130, 60, 0.14) 30px, rgba(190, 90, 170, 0) 47px),
    linear-gradient(90deg, #17131c 0, #2a2028 150px, #5a4456 260px, #4c3a4a 360px, #5a5444 470px, #7a6e7a 540px, #54473e 660px, #5f5a3e 760px, #50424c 830px, #5e3a58 930px, #4f4a3c 990px, #5a3c58 1070px, #3c3238 1150px, #4c2f55 1220px, #1d1a2e 1300px, #1c1628 1600px, #100e1a 100%);
`;
const Start = styled.button`
  width: 40px;
  border: 0;
  background: none;
  margin-right: 9px;
`;
const Task = styled.button`
  width: ${p => (p.$stack ? 51 : 58)}px;
  margin-right: ${p => (p.$stack ? 7 : 0)}px;
  border: 1px solid rgba(230, 220, 235, 0.55);
  border-radius: 3px;
  background: linear-gradient(135deg, rgba(255, 255, 255, 0.4), rgba(255, 255, 255, 0.12) 50%, rgba(255, 255, 255, ${p => (p.$active ? 0.5 : 0.15)}));
  box-shadow: ${p => (p.$stack ? "3px 0 0 -1px #4a3f48, 4px 0 0 -1px #aaa0a8, 7px 0 0 -2px #4a3f48, 8px 0 0 -2px #aaa0a8" : "none")};
  display: flex;
  align-items: center;
  justify-content: center;
`;
const Tray = styled.div`
  margin-left: auto;
  display: flex;
  align-items: center;
  gap: 8px;
`;
const Clock = styled.time`
  width: 74px;
  color: #fff;
  text-align: center;
  font: 400 12px/18px ${ui};
  padding-top: 2px;
  span {
    display: block;
  }
`;
const ShowDesktop = styled.button`
  align-self: stretch;
  width: 14px;
  margin-left: -7px;
  border: 1px solid #777;
  background: linear-gradient(135deg, #77727e, #26222c);
`;

const reel = (
  <>
    <path d="M2 15L24 31L29 28Z" fill="#bfe6e0" stroke="#123" />
    <ellipse cx="20" cy="20" rx="13" ry="8" fill="#16a79c" stroke="#034" />
    <ellipse cx="20" cy="19" rx="10" ry="6" fill="#3fd6c4" stroke="#034" />
    <ellipse cx="20" cy="18" rx="5" ry="3" fill="#e8d44a" stroke="#034" />
    <ellipse cx="20" cy="18" rx="2" ry="1" fill="#023" />
    <path d="M2 7L7 3L11 5L14 8L5 11Z" fill="#17b0a4" stroke="#034" />
  </>
);
const tasks = [
  {
    name: "Shell",
    art: (
      <>
        <path d="M1 12Q4 2 16 2Q28 2 31 12Q30 20 22 25L18 30H13L9 25Q2 20 1 12Z" fill="#f6cf7c" stroke="#c08a2c" />
        <path d="M15 28L4 11M15 28L9 5M15 28L16 3M16 28L24 5M16 28L29 11" stroke="#d9a450" strokeWidth="1.200" />
        <path d="M21 12L24 18L31 19L26 23L28 30L21 27L15 30L16 23L12 19L19 18Z" fill="#f08a1e" stroke="#b85a08" />
      </>
    )
  },
  {
    name: "Disk",
    art: (
      <>
        <path d="M1 0H31V32H3L1 30Z" fill="#1f3cc4" />
        <path d="M9 0H24V11H9Z" fill="#e4e8f0" />
        <path d="M18 2H22V9H18Z" fill="#1f3cc4" />
        <path d="M4 15H28V32H4Z" fill="#fff" />
        <path d="M5 19H27M5 23H15M5 27H15" stroke="#c04040" />
        <text x="16" y="29" fontFamily="Liberation Sans, sans-serif" fontSize="8" fill="#333">
          64·
        </text>
      </>
    )
  },
  {
    name: "G",
    art: (
      <path d="M29 3L17 5L3 16L4 26L10 30L23 29L29 24L30 13L18 16L16 20H23L21 24L12 25L9 22L9 18L18 9L27 7Z" fill="#d8201c" />
    )
  },
  {
    name: "Notes",
    art: (
      <>
        <path d="M3 1H29V31H3Z" fill="#f5fbff" stroke="#8fc4dc" />
        <path d="M6 5H26M6 9H26M6 13H26M6 17H26M6 21H26M6 25H26" stroke="#1f8fc0" strokeWidth="2" />
      </>
    )
  },
  {
    name: "Project",
    art: (
      <>
        <path d="M20 8V1H3L2 20L1 27" fill="none" stroke="#0f9440" strokeWidth="1.500" />
        <path d="M9 8L20 3Q31 5 29 14Q27 20 17 21L16 30H10L11 20Z" fill="#10983e" />
        <path d="M2 16H10M1 20H10M1 24H10M0 28H10" stroke="#0f9440" />
      </>
    )
  },
  { name: "Genesis", art: reel },
  {
    name: "Exceed",
    stack: true,
    active: true,
    art: (
      <>
        <path d="M0 2H10L32 31H22Z" fill="#6a1390" stroke="#fff" />
        <path d="M28 2L18 14M13 19L3 31" stroke="#fff" strokeWidth="4" />
        <path d="M29 1L18 14M13 19L2 31" stroke="#222" strokeWidth="2" />
      </>
    )
  },
  {
    name: "Bird",
    art: (
      <>
        <circle cx="16" cy="16" r="16" fill="#2b97e8" />
        <path d="M7 6Q17 13 25 14L24 20L20 21L22 24L18 30L17 24L13 20Q9 16 9 12Z" fill="#fff" />
      </>
    )
  },
  {
    name: "Excel",
    stack: true,
    art: (
      <>
        <path d="M2 25V8Q4 1 13 1H26V6" fill="#dcecc8" stroke="#5da32c" strokeWidth="2" />
        <path d="M6 6H29V31L6 27Z" fill="#f4faf0" stroke="#5da32c" />
        <path d="M19 12H28M19 18H28M7 24H28M20 8V29M13 23V28" stroke="#5da32c" strokeWidth="1.500" />
        <path d="M8 10L17 21M17 9L8 22" stroke="#1f6a1c" strokeWidth="3" />
      </>
    )
  },
  { name: "Genesis 2", art: reel },
  {
    name: "Word",
    art: (
      <>
        <path d="M2 26V8Q4 1 13 1H26V6" fill="#7da0d8" stroke="#2a5caa" strokeWidth="2" />
        <path d="M8 5L29 3V29L8 32Z" fill="#f4f8ff" stroke="#2a5caa" />
        <path d="M10 9L12 19L15 11L17 19L20 8" fill="none" stroke="#1f4fa0" strokeWidth="2" />
        <path d="M22 9H27M22 13H27M22 17H27M11 23H27M11 27H27" stroke="#1f4fa0" strokeWidth="2" />
      </>
    )
  }
];

const Bottom = () => (
  <Taskbar>
    <Start type="button" aria-label="Start">
      <svg width="40" height="40" viewBox="0 0 40 40">
        <defs>
          <radialGradient id="orb" cx=".5" cy=".9" r=".9">
            <stop offset="0" stopColor="#3fd0f4" />
            <stop offset=".5" stopColor="#1a5f9c" />
            <stop offset="1" stopColor="#8aa9bc" />
          </radialGradient>
        </defs>
        <circle cx="20" cy="20" r="18" fill="url(#orb)" stroke="#0a2438" />
        <path d="M11 12Q15 9 19 12L17 19Q13 17 9 19Z" fill="#f0602a" />
        <path d="M20 12Q25 15 30 12L28 19Q23 22 18 19Z" fill="#8cc63c" />
        <path d="M9 21Q13 18 17 21L15 28Q11 26 7 28Z" fill="#3f9be0" />
        <path d="M18 21Q23 24 28 21L26 28Q21 31 16 28Z" fill="#fcc62a" />
      </svg>
    </Start>
    {tasks.map(({ name, art, stack, active }) => (
      <Task type="button" key={name} aria-label={name} $stack={stack} $active={active}>
        <svg width="32" height="32" viewBox="0 0 32 32">
          {art}
        </svg>
      </Task>
    ))}
    <Tray>
      <svg width="16" height="16" viewBox="0 0 16 16">
        <path d="M1 6H15V14H1Z" fill="#ccc" />
        <path d="M4 5Q5 2 8 4Q11 5 13 1" fill="none" stroke="#ddd" />
        <path d="M3 8H13M3 10H13M4 12H12" stroke="#444" strokeDasharray="1.500 1" />
      </svg>
      <svg width="16" height="18" viewBox="0 0 16 18">
        <circle cx="8" cy="8" r="7.500" fill="#1c3fd0" stroke="#fff" />
        <text x="8" y="13" textAnchor="middle" fill="#fff" fontFamily="Liberation Sans, sans-serif" fontWeight="700" fontSize="13">
          ?
        </text>
      </svg>
      <svg width="10" height="24" viewBox="0 0 10 24">
        <path d="M3 2H9V6H3ZM1 4H6V8H1Z" fill="none" stroke="#fff" />
        <path d="M2 17H8L5 20Z" fill="#fff" />
      </svg>
      <svg width="12" height="10" viewBox="0 0 12 10">
        <path d="M2 8L6 4L10 8Z" fill="#fff" />
      </svg>
      <svg width="17" height="18" viewBox="0 0 17 18">
        <path d="M2 1V17M2 2Q6 0 9 3L15 4V11H2Z" fill="#fff" stroke="#fff" />
        <circle cx="11" cy="12" r="5" fill="#d8281c" />
        <path d="M9 10L13 14M13 10L9 14" stroke="#fff" strokeWidth="1.500" />
      </svg>
      <svg width="17" height="18" viewBox="0 0 17 18">
        <path d="M6 5H16V13H6ZM11 13V16M7 16H15M1 1V5H5V1M3 5V13H6" fill="none" stroke="#fff" strokeWidth="1.500" />
      </svg>
      <svg width="16" height="16" viewBox="0 0 16 16">
        <path d="M1 5H4L8 1V15L4 11H1Z" fill="#fff" />
        <path d="M10 5Q12 8 10 11M12 3Q16 8 12 13" fill="none" stroke="#fff" />
      </svg>
      <Clock>
        <span>14:54</span>
        <span>2020/8/14</span>
      </Clock>
      <ShowDesktop type="button" aria-label="Show desktop" />
    </Tray>
  </Taskbar>
);

export default () => (
  <>
    <GlobalStyle />
    <Desktop>
      <MainWindow />
      <ChecklistEditor />
      <Histogram />
      <ResultsViewer />
      <Bottom />
    </Desktop>
  </>
);
